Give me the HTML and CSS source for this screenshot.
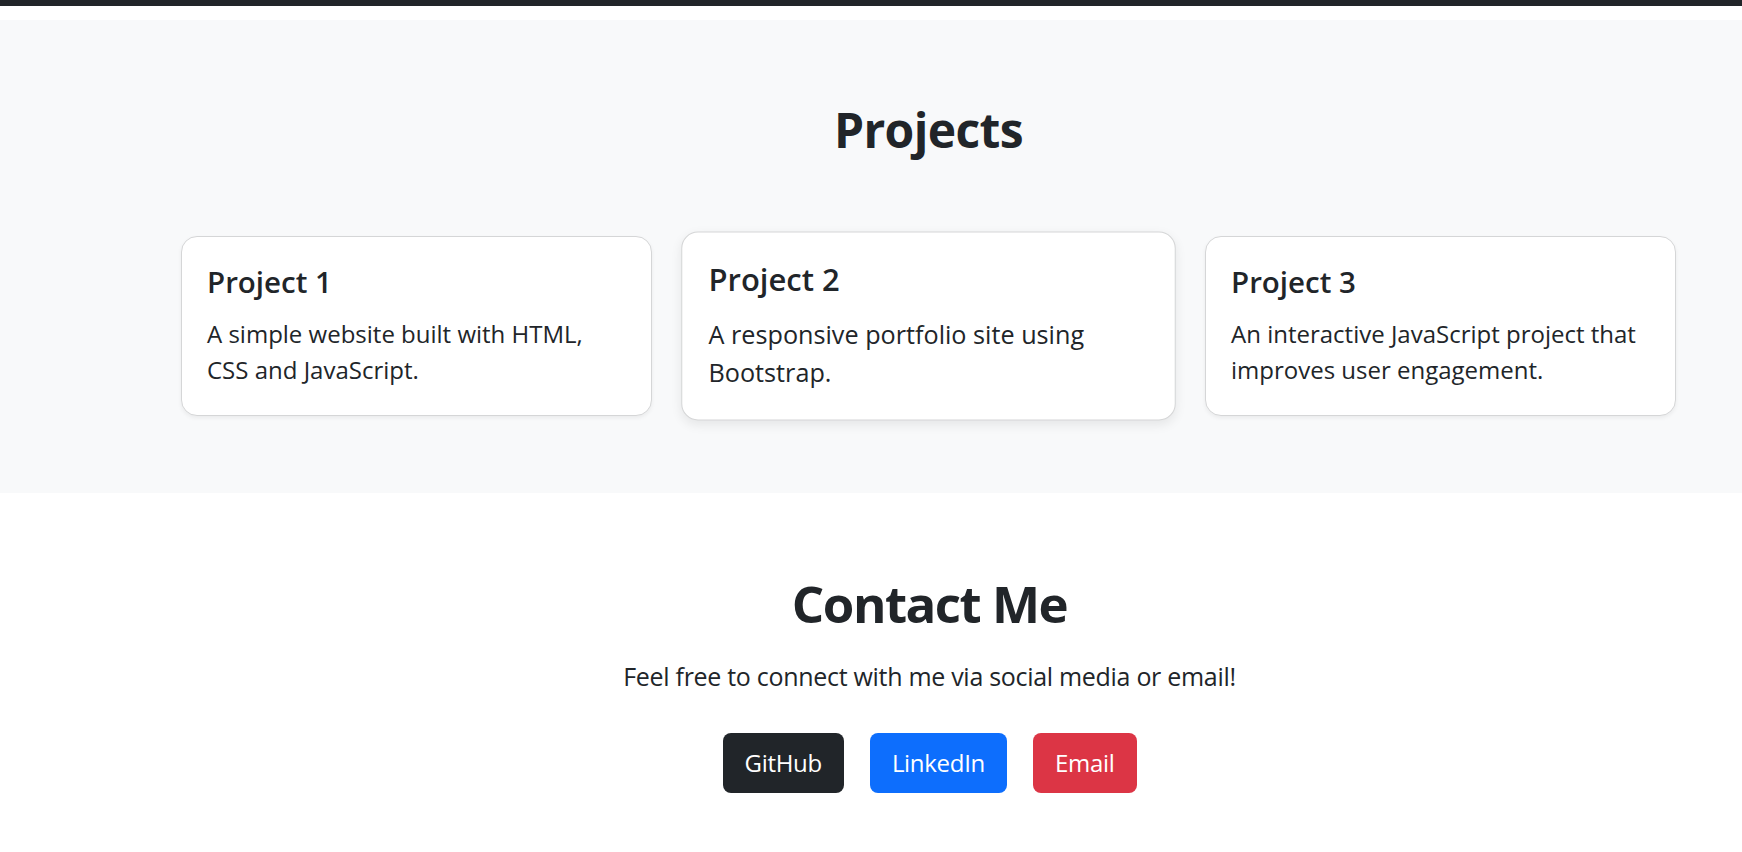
FILE: index.html
```html
<!DOCTYPE html>
<html lang="en">
<head>
<meta charset="utf-8">
<title>Portfolio</title>
<link rel="stylesheet" href="styles.css">
</head>
<body>
<div class="navbar-edge"></div>
<section class="projects">
  <div class="inner">
    <h2 class="section-title">Projects</h2>
    <div class="cards">
      <div class="card">
        <h5 class="card-title">Project 1</h5>
        <p class="card-text">A simple website built with HTML, CSS and JavaScript.</p>
      </div>
      <div class="card card-hover">
        <h5 class="card-title">Project 2</h5>
        <p class="card-text">A responsive portfolio site using Bootstrap.</p>
      </div>
      <div class="card">
        <h5 class="card-title">Project 3</h5>
        <p class="card-text">An interactive JavaScript project that improves user engagement.</p>
      </div>
    </div>
  </div>
</section>
<section class="contact">
  <div class="inner">
    <h2 class="contact-title">Contact Me</h2>
    <p class="lead">Feel free to connect with me via social media or email!</p>
    <div class="buttons">
      <a class="btn btn-dark" href="#">GitHub</a>
      <a class="btn btn-primary" href="#">LinkedIn</a>
      <a class="btn btn-danger" href="#">Email</a>
    </div>
  </div>
</section>
</body>
</html>
```
FILE: styles.css
```css
* { box-sizing: border-box; }
html, body { margin: 0; padding: 0; }
body {
  font-family: "Open Sans", "Noto Sans", sans-serif;
  color: #212529;
  background: #fff;
  overflow: hidden;
}
.navbar-edge {
  height: 6px;
  background: #212529;
  margin-bottom: 14px;
}
.projects {
  background: #f8f9fa;
  height: 473px;
  padding-left: 115px;
  padding-top: 81px;
}
.inner {
  max-width: 1495px;
  margin: 0 auto;
}
.section-title {
  margin: 0;
  text-align: center;
  font-size: 48px;
  line-height: 1.2;
  font-weight: 700;
  letter-spacing: -0.6px;
}
.cards {
  margin-top: 77px;
  display: grid;
  grid-template-columns: repeat(3, 471px);
  column-gap: 41px;
}
.card {
  background: #fff;
  border: 1px solid #d5d6d7;
  border-radius: 16px;
  height: 180px;
  padding: 27px 25px 24px;
  box-shadow: 0 2px 4px rgba(0,0,0,0.06);
}
.card-hover {
  transform: scale(1.05);
  box-shadow: 0 4px 10px rgba(0,0,0,0.08);
}
.card-title {
  margin: 0 0 16px;
  font-size: 29.5px;
  line-height: 36px;
  font-weight: 600;
  letter-spacing: 0;
}
.card-text {
  margin: 0;
  font-size: 24px;
  line-height: 36px;
  letter-spacing: 0;
}
.contact {
  padding-left: 117px;
  padding-top: 80px;
}
.contact-title {
  margin: 0;
  text-align: center;
  font-size: 51px;
  line-height: 1.2;
  font-weight: 700;
  letter-spacing: -1.5px;
}
.lead {
  margin: 24px 0 0;
  text-align: center;
  font-size: 25px;
  line-height: 36px;
  letter-spacing: -0.3px;
}
.buttons {
  margin-top: 39px;
  display: flex;
  justify-content: center;
  gap: 26px;
}
.btn {
  display: inline-block;
  height: 60px;
  padding: 0 22px;
  border-radius: 8px;
  color: #fff;
  text-decoration: none;
  font-size: 24px;
  line-height: 60px;
  letter-spacing: -0.3px;
}
.btn-dark { background: #212529; }
.btn-primary { background: #0d6efd; }
.btn-danger { background: #dc3545; }
```
